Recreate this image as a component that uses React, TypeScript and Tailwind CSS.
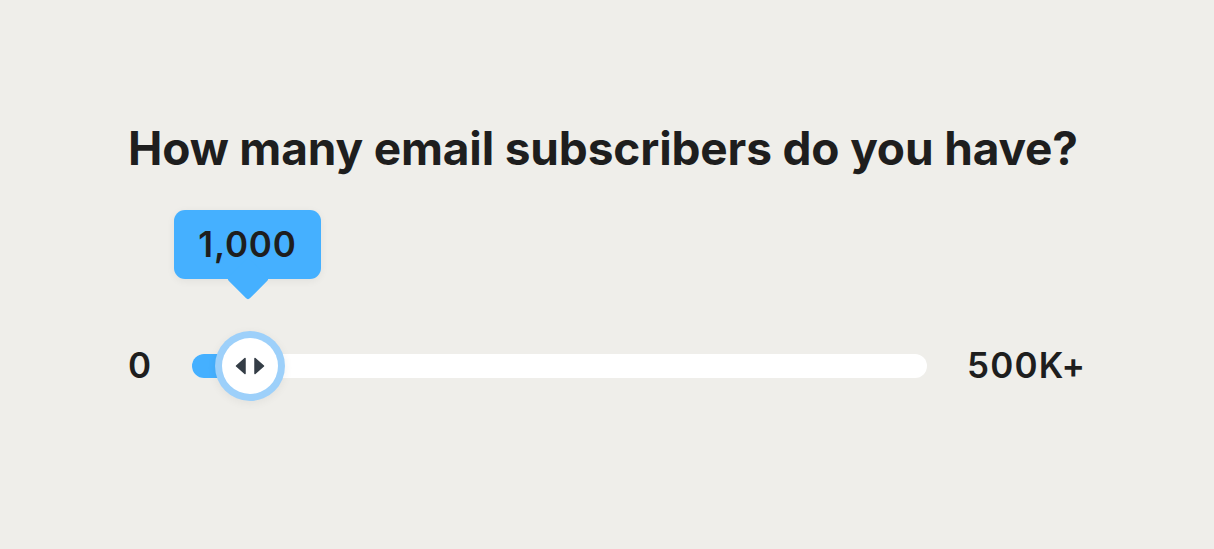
import { useState } from "react";

const App = () => {
  const [value] = useState(1000);
  // thumb position on the track, in px from its left edge
  const pos = 58;

  return (
    <div className="min-h-screen w-full bg-[#efeeea] pl-[128px] pt-[118px] font-['Inter',sans-serif] text-[#1e1e1e]">
      <h1 className="text-[46px] font-bold leading-[60px] tracking-[-0.15px]">
        How many email subscribers do you have?
      </h1>

      <div className="mt-[170px] flex items-center">
        <span className="w-[64px] text-[35px] font-semibold leading-none">0</span>

        {/* Track */}
        <div className="relative h-6 w-[735px] rounded-full bg-white">
          <div
            className="absolute left-0 top-0 h-6 rounded-full bg-[#45b0ff]"
            style={{ width: pos + 10 }}
          />

          {/* Tooltip */}
          <div
            className="absolute top-[-144px] flex h-[69px] w-[147px] items-center justify-center rounded-[11px] bg-[#45b0ff] shadow-[0_2px_8px_rgba(0,0,0,0.06)]"
            style={{ left: pos - 76 }}
          >
            <div className="absolute bottom-[-15px] left-1/2 h-[30px] w-[30px] -translate-x-1/2 rotate-45 rounded-[3px] bg-[#45b0ff]" />
            <span className="relative text-[35px] font-semibold leading-none tracking-[0.8px]">
              {value.toLocaleString("en-US")}
            </span>
          </div>

          {/* Thumb */}
          <div
            className="absolute top-1/2 flex h-[70px] w-[70px] -translate-x-1/2 -translate-y-1/2 items-center justify-center rounded-full bg-[#9dd0fa] shadow-[0_2px_10px_rgba(0,0,0,0.06)]"
            style={{ left: pos }}
          >
            <div className="flex h-[56px] w-[56px] items-center justify-center gap-[8px] rounded-full bg-white">
              <svg width="11" height="18" viewBox="0 0 11 18">
                <path d="M10 1.5 L1.5 9 L10 16.5 Z" fill="#343d46" stroke="#343d46" strokeWidth="1.5" strokeLinejoin="round" />
              </svg>
              <svg width="11" height="18" viewBox="0 0 11 18">
                <path d="M1 1.5 L9.5 9 L1 16.5 Z" fill="#343d46" stroke="#343d46" strokeWidth="1.5" strokeLinejoin="round" />
              </svg>
            </div>
          </div>
        </div>

        <span className="ml-[40px] text-[35px] font-semibold leading-none tracking-[1.2px]">500K+</span>
      </div>
    </div>
  );
};

export default App;
